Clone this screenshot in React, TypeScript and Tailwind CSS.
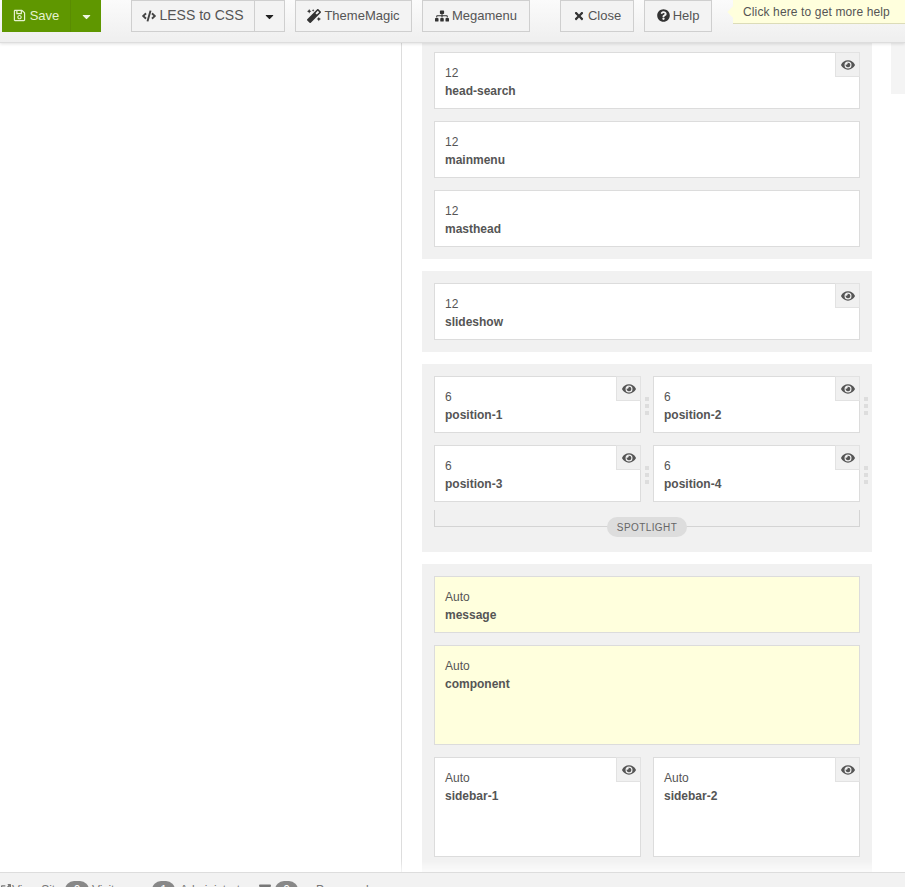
import { FaRegSave, FaCaretDown, FaCode, FaMagic, FaSitemap, FaTimes, FaQuestionCircle, FaEye, FaExternalLinkAlt, FaEnvelope } from "react-icons/fa";
import type { ReactNode } from "react";

function Btn({ w, icon, label, size }: { w: string; icon: ReactNode; label: string; size: string }) {
  return (
    <div className={`${w} ${size} h-8 flex items-center justify-center gap-[3px] pb-px bg-[#f3f3f3] border border-[#cfcfcf] text-[#555]`}>
      {icon}
      <span>{label}</span>
    </div>
  );
}

function Box({ span, name, eye, grip, tall, yellow }: { span: string; name: string; eye?: boolean; grip?: boolean; tall?: boolean; yellow?: boolean }) {
  return (
    <div className={`relative ${tall ? "h-[100px]" : "h-[57px]"} border border-[#dcdcdc] pl-[10px] pt-[11px] text-[12px] leading-[18px] text-[#555] ${yellow ? "bg-[#ffffdd]" : "bg-white"}`}>
      <div>{span}</div>
      <div className="font-bold">{name}</div>
      {eye && (
        <div className="absolute -right-px -top-px w-[25px] h-[25px] bg-[#f0f0f0] border border-[#e2e2e2] flex items-center justify-center text-[#555]">
          <FaEye className="w-[14px] h-[14px]" />
        </div>
      )}
      {grip && (
        <div className="absolute -right-[9px] top-[20px] flex flex-col gap-[3px]">
          <div className="w-[4px] h-[4px] bg-[#dddddd]" />
          <div className="w-[4px] h-[4px] bg-[#dddddd]" />
          <div className="w-[4px] h-[4px] bg-[#dddddd]" />
        </div>
      )}
    </div>
  );
}

export default function App() {
  return (
    <div className="h-screen flex flex-col overflow-hidden bg-white font-['Liberation_Sans',Arial,sans-serif]">
      <header className="relative z-10 h-[43px] shrink-0 flex items-start pl-[2px] bg-gradient-to-b from-[#fbfbfb] to-[#efefef] border-b border-[#dddddd] shadow-[0_1px_3px_rgba(0,0,0,0.12)]">
        <div className="flex h-8 bg-[#5f9700] text-[#e6f2d0] text-[13px]">
          <div className="w-[69px] flex items-center justify-center gap-[4px] pb-px border-r border-[#5a8c02]">
            <FaRegSave className="w-[13px] h-[13px]" />
            <span>Save</span>
          </div>
          <div className="w-[30px] flex items-center justify-center">
            <FaCaretDown className="w-[13px] h-[13px] text-[#eef5e0]" />
          </div>
        </div>
        <div className="flex ml-[30px]">
          <Btn w="w-[124px]" size="text-[14px]" icon={<FaCode className="w-[14px] h-[14px] text-[#444]" />} label="LESS to CSS" />
          <div className="w-[30px] h-8 flex items-center justify-center bg-[#f3f3f3] border border-l-0 border-[#cfcfcf] text-[#222]">
            <FaCaretDown className="w-[13px] h-[13px]" />
          </div>
        </div>
        <div className="ml-[10px]">
          <Btn w="w-[117px]" size="text-[13px]" icon={<FaMagic className="w-[14px] h-[14px] text-[#333]" />} label="ThemeMagic" />
        </div>
        <div className="ml-[10px]">
          <Btn w="w-[108px]" size="text-[13px]" icon={<FaSitemap className="w-[14px] h-[14px] text-[#333]" />} label="Megamenu" />
        </div>
        <div className="ml-[30px]">
          <Btn w="w-[74px]" size="text-[13px]" icon={<FaTimes className="w-[12px] h-[12px] text-[#333]" />} label="Close" />
        </div>
        <div className="ml-[10px]">
          <Btn w="w-[68px]" size="text-[13px]" icon={<FaQuestionCircle className="w-[13px] h-[13px] text-[#333]" />} label="Help" />
        </div>
        <div className="relative ml-[21px] flex-1 h-[24px] pl-[10px] flex items-center bg-[#ffffdd] border-b border-[#dcdcb8] text-[12px] tracking-[0.13px] text-[#555] whitespace-nowrap">
          <div className="absolute -left-[4px] top-[8px] w-[8px] h-[8px] rotate-45 bg-[#ffffdd]" />
          <span className="relative">Click here to get more help</span>
        </div>
      </header>

      <main className="flex-1 flex min-h-0 overflow-hidden">
        <div className="w-[402px] shrink-0 border-r border-[#dddddd]" />
        <div className="ml-[20px] w-[450px] shrink-0 flex flex-col gap-[12px]">
          <section className="bg-[#f1f1f1] px-[12px] pt-[9px] pb-[12px] flex flex-col gap-[12px]">
            <Box span="12" name="head-search" eye />
            <Box span="12" name="mainmenu" />
            <Box span="12" name="masthead" />
          </section>
          <section className="bg-[#f1f1f1] p-[12px]">
            <Box span="12" name="slideshow" eye />
          </section>
          <section className="bg-[#f1f1f1] px-[12px] pt-[12px] pb-[25px]">
            <div className="grid grid-cols-2 gap-x-[12px] gap-y-[12px]">
              <Box span="6" name="position-1" eye grip />
              <Box span="6" name="position-2" eye grip />
              <Box span="6" name="position-3" eye grip />
              <Box span="6" name="position-4" eye grip />
            </div>
            <div className="relative mt-[8px] h-[17px] border border-t-0 border-[#d4d4d4]">
              <div className="absolute left-1/2 -translate-x-1/2 top-[7px] w-[80px] h-[20px] rounded-full bg-[#dddddd] flex items-center justify-center text-[10px] tracking-[0.4px] text-[#666]">
                SPOTLIGHT
              </div>
            </div>
          </section>
          <section className="flex-1 bg-[#f1f1f1] p-[12px] flex flex-col gap-[12px]">
            <Box span="Auto" name="message" yellow />
            <Box span="Auto" name="component" tall yellow />
            <div className="grid grid-cols-2 gap-x-[12px]">
              <Box span="Auto" name="sidebar-1" eye tall />
              <Box span="Auto" name="sidebar-2" eye tall />
            </div>
          </section>
        </div>
        <div className="ml-[19px] flex-1 h-[51px] bg-[#f4f4f4]" />
      </main>

      <footer className="relative z-10 h-[15px] shrink-0 overflow-hidden border-t border-[#dddddd] bg-[#f2f2f2] shadow-[0_-6px_10px_rgba(255,255,255,0.75)] text-[12px] leading-[18px] text-[#777]">
        <div className="flex items-start pt-[8px] whitespace-nowrap">
          <FaExternalLinkAlt className="w-[10px] h-[10px] mt-[3px] ml-[1px]" />
          <span className="ml-[1px] w-[53px]">View Site</span>
          <span className="w-[24px] h-[18px] rounded-full bg-[#888] text-white text-center">0</span>
          <span className="ml-[3px] w-[60px]">Visitors</span>
          <span className="w-[23px] h-[18px] rounded-full bg-[#888] text-white text-center">1</span>
          <span className="ml-[5px] w-[79px]">Administrators</span>
          <FaEnvelope className="w-[12px] h-[12px] mt-[2px]" />
          <span className="ml-[4px] w-[23px] h-[18px] rounded-full bg-[#888] text-white text-center">0</span>
          <span className="ml-[18px]">Password</span>
        </div>
      </footer>
    </div>
  );
}
